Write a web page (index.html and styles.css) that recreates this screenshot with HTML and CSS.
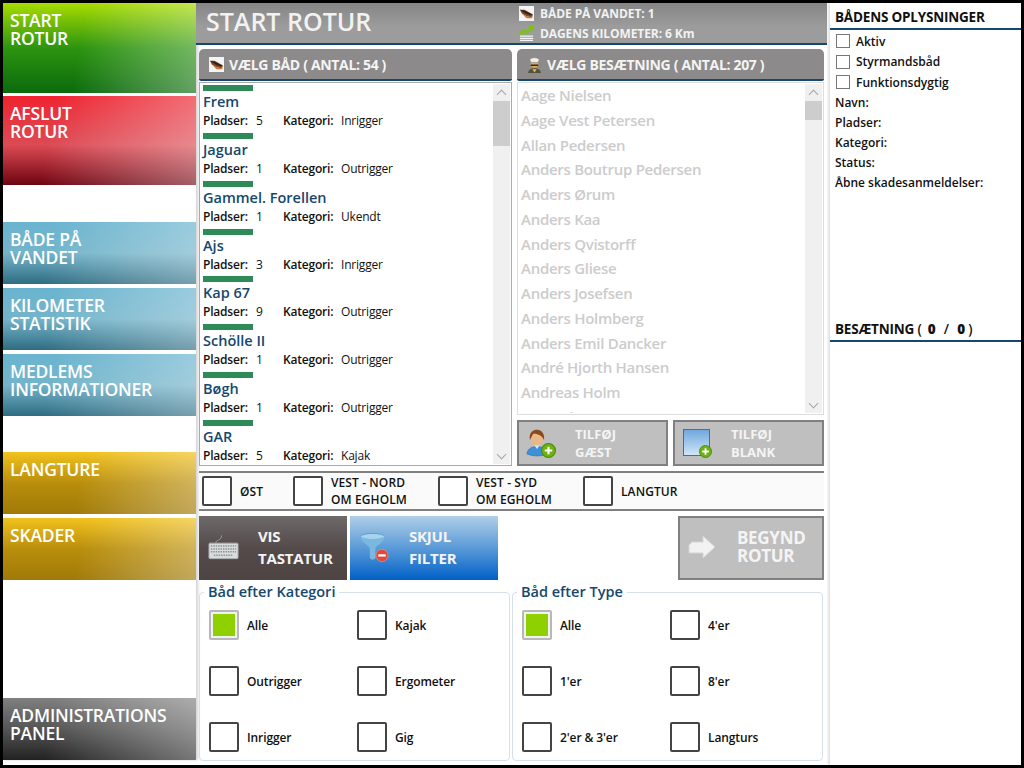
FILE: index.html
```html
<!DOCTYPE html>
<html lang="en">
<head>
  <meta charset="UTF-8">
  <title>Start rotur</title>
  <link rel="stylesheet" href="styles.css">
</head>
<body>
  <svg class="defs" width="0" height="0">
    <defs>
      <symbol id="boat" viewBox="0 0 16 16">
        <rect width="16" height="16" fill="#f4f4f4"/>
        <path d="M1 4 L6 4 L15 9 L13 12 L8 11 L3 8 Z" fill="#7a4a26"/>
        <path d="M1 4 L6 5 L14 9 L13 10 L7 8 Z" fill="#2e2018"/>
        <path d="M3 8 L8 11 L13 12 L15 9 L14 13 L8 13 Z" fill="#c8743a"/>
      </symbol>
      <symbol id="plus" viewBox="0 0 14 14">
        <circle cx="7" cy="7" r="6.5" fill="#6cb212" stroke="#4d8a0a"/>
        <path d="M7 3.5v7M3.5 7h7" stroke="#fff" stroke-width="2"/>
      </symbol>
    </defs>
  </svg>

  <div class="app">
    <nav class="side">
      <a class="nav-btn nav-big green">START<br>ROTUR</a>
      <a class="nav-btn nav-big red">AFSLUT<br>ROTUR</a>
      <a class="nav-btn blue blue-first">BÅDE PÅ<br>VANDET</a>
      <a class="nav-btn blue">KILOMETER<br>STATISTIK</a>
      <a class="nav-btn blue">MEDLEMS<br>INFORMATIONER</a>
      <a class="nav-btn gold gold-first">LANGTURE</a>
      <a class="nav-btn gold">SKADER</a>
      <a class="nav-btn dark admin">ADMINISTRATIONS<br>PANEL</a>
    </nav>

    <main class="main">
      <header class="top">
        <h1>START ROTUR</h1>
        <div class="stats">
          <div class="stat"><svg class="stat-icon"><use href="#boat"/></svg>BÅDE PÅ VANDET: 1</div>
          <div class="stat">
            <svg class="stat-icon" viewBox="0 0 16 16">
              <path d="M1 10h14v1.500H1zM1 12.500h14V14H1zM1 15h14v1H1z" fill="#f4f4f4"/>
              <path d="M1 9 L5 4.500 L8 7 L13 2" fill="none" stroke="#7cc212" stroke-width="3"/>
              <path d="M9.500 0h6v6z" fill="#7cc212"/>
            </svg>DAGENS KILOMETER: 6 Km
          </div>
        </div>
      </header>

      <div class="pickers">
        <section class="boats">
          <h2 class="panel-head"><svg class="head-icon"><use href="#boat"/></svg>VÆLG BÅD ( ANTAL: 54 )</h2>
          <div class="list boat-list">
            <div class="list-body boat-rows">
              <div class="boat"><i></i><b>Frem</b><p><span class="k1">Pladser:</span><span class="v1">5</span><span class="k2">Kategori:</span>Inrigger</p></div>
              <div class="boat"><i></i><b>Jaguar</b><p><span class="k1">Pladser:</span><span class="v1">1</span><span class="k2">Kategori:</span>Outrigger</p></div>
              <div class="boat"><i></i><b>Gammel. Forellen</b><p><span class="k1">Pladser:</span><span class="v1">1</span><span class="k2">Kategori:</span>Ukendt</p></div>
              <div class="boat"><i></i><b>Ajs</b><p><span class="k1">Pladser:</span><span class="v1">3</span><span class="k2">Kategori:</span>Inrigger</p></div>
              <div class="boat"><i></i><b>Kap 67</b><p><span class="k1">Pladser:</span><span class="v1">9</span><span class="k2">Kategori:</span>Outrigger</p></div>
              <div class="boat"><i></i><b>Schölle II</b><p><span class="k1">Pladser:</span><span class="v1">1</span><span class="k2">Kategori:</span>Outrigger</p></div>
              <div class="boat"><i></i><b>Bøgh</b><p><span class="k1">Pladser:</span><span class="v1">1</span><span class="k2">Kategori:</span>Outrigger</p></div>
              <div class="boat"><i></i><b>GAR</b><p><span class="k1">Pladser:</span><span class="v1">5</span><span class="k2">Kategori:</span>Kajak</p></div>
            </div>
            <div class="scrollbar"><span class="arrow"></span><div class="thumb thumb-boats"></div><span class="arrow arrow-down"></span></div>
          </div>
        </section>

        <section class="crew">
          <h2 class="panel-head">
            <svg class="head-icon crew-icon" viewBox="0 0 14 16">
              <path d="M1 16 C1 10 13 10 13 16Z" fill="#55523a"/>
              <path d="M5 12.500 h4 l-2 3z" fill="#d8c060"/>
              <circle cx="7" cy="7.500" r="3.600" fill="#d9aa5c"/>
              <path d="M3.500 8 h7 v1.400 h-7z" fill="#2a2a20"/>
              <path d="M2.500 3 Q7 0 11.500 3 L10.500 6 H3.500Z" fill="#f2f0e4" stroke="#777" stroke-width=".5"/>
            </svg>VÆLG BESÆTNING ( ANTAL: 207 )
          </h2>
          <div class="list crew-list">
            <div class="list-body names">
              <div>Aage Nielsen</div>
              <div>Aage Vest Petersen</div>
              <div>Allan Pedersen</div>
              <div>Anders Boutrup Pedersen</div>
              <div>Anders Ørum</div>
              <div>Anders Kaa</div>
              <div>Anders Qvistorff</div>
              <div>Anders Gliese</div>
              <div>Anders Josefsen</div>
              <div>Anders Holmberg</div>
              <div>Anders Emil Dancker</div>
              <div>André Hjorth Hansen</div>
              <div>Andreas Holm</div>
              <div>Anne Thomsen</div>
            </div>
            <div class="scrollbar"><span class="arrow"></span><div class="thumb thumb-crew"></div><span class="arrow arrow-down"></span></div>
          </div>
          <div class="add-row">
            <button class="add-btn">
              <svg class="add-icon" viewBox="0 0 30 30">
                <path d="M1 26 C1 16 21 16 21 26 Q11 30 1 26Z" fill="#3f8fd6" stroke="#2a6cab" stroke-width=".6"/>
                <path d="M8 17 L11 21 L14 17Z" fill="#cfe6f8"/>
                <ellipse cx="11" cy="10" rx="6.500" ry="7.500" fill="#eab98a"/>
                <path d="M4 12 C1 -1 20 -2 18 12 C16 7 10 5 7 6 C6 8 5 10 4 12Z" fill="#8a4a1c"/>
                <use href="#plus" x="15" y="15" width="15" height="15"/>
              </svg>
              <span>TILFØJ<br>GÆST</span>
            </button>
            <button class="add-btn">
              <svg class="add-icon" viewBox="0 0 30 30">
                <defs><linearGradient id="sheet" x1="0" y1="0" x2="0" y2="1"><stop offset="0" stop-color="#6ea6dc"/><stop offset="1" stop-color="#d2e6f8"/></linearGradient></defs>
                <rect x="1.500" y="1.500" width="26" height="26" fill="url(#sheet)" stroke="#2f74b5"/>
                <use href="#plus" x="17" y="17" width="13" height="13"/>
              </svg>
              <span>TILFØJ<br>BLANK</span>
            </button>
          </div>
        </section>
      </div>

      <div class="routes">
        <label class="route route-ost"><i class="box"></i>ØST</label>
        <label class="route route-nord"><i class="box"></i><span>VEST - NORD<br>OM EGHOLM</span></label>
        <label class="route route-syd"><i class="box"></i><span>VEST - SYD<br>OM EGHOLM</span></label>
        <label class="route"><i class="box"></i>LANGTUR</label>
      </div>

      <div class="actions">
        <button class="act act-keys">
          <svg class="act-icon" viewBox="0 0 32 26">
            <path d="M8 9 C8 5 14 7 14 1" fill="none" stroke="#999"/>
            <rect x="1" y="9" width="30" height="16" rx="1" fill="#d8dcdc" stroke="#a8acac"/>
            <path d="M3 12h26M3 15h26M3 18h26M6 21.500h20" stroke="#8d9292" stroke-width="1.600" stroke-dasharray="1.500 1"/>
          </svg>
          <span>VIS<br>TASTATUR</span>
        </button>
        <button class="act act-filter">
          <svg class="act-icon" viewBox="0 0 32 32">
            <ellipse cx="14" cy="5" rx="13" ry="3.500" fill="#a6d4ee" stroke="#5a9ccc"/>
            <path d="M1 5 C3 12 10 14 11 17 V28 Q14 31 17 28 V17 C18 14 25 12 27 5 Q14 10 1 5Z" fill="#7ab8e0"/>
            <circle cx="24" cy="25" r="6.500" fill="#e2483a" stroke="#f0a090" stroke-width=".6"/>
            <rect x="20" y="23.800" width="8" height="2.400" fill="#fff"/>
          </svg>
          <span>SKJUL<br>FILTER</span>
        </button>
        <button class="act act-begin">
          <svg class="act-icon begin-icon" viewBox="0 0 28 26">
            <path d="M1 11 L4 8 H15 V2 L27 13 L15 24 V19 H1Z" fill="#f2f2f2" stroke="#d4d4d4"/>
          </svg>
          <span>BEGYND<br>ROTUR</span>
        </button>
      </div>

      <div class="filters">
        <fieldset class="group">
          <legend>Båd efter Kategori</legend>
          <div class="opts">
            <label class="opt"><i class="box on"></i>Alle</label>
            <label class="opt"><i class="box"></i>Kajak</label>
            <label class="opt"><i class="box"></i>Outrigger</label>
            <label class="opt"><i class="box"></i>Ergometer</label>
            <label class="opt"><i class="box"></i>Inrigger</label>
            <label class="opt"><i class="box"></i>Gig</label>
          </div>
        </fieldset>
        <fieldset class="group">
          <legend>Båd efter Type</legend>
          <div class="opts">
            <label class="opt"><i class="box on"></i>Alle</label>
            <label class="opt"><i class="box"></i>4'er</label>
            <label class="opt"><i class="box"></i>1'er</label>
            <label class="opt"><i class="box"></i>8'er</label>
            <label class="opt"><i class="box"></i>2'er &amp; 3'er</label>
            <label class="opt"><i class="box"></i>Langturs</label>
          </div>
        </fieldset>
      </div>
    </main>

    <aside class="info">
      <h3>BÅDENS OPLYSNINGER</h3>
      <div class="info-body">
        <label class="check"><i></i>Aktiv</label>
        <label class="check"><i></i>Styrmandsbåd</label>
        <label class="check"><i></i>Funktionsdygtig</label>
        <div class="field">Navn:</div>
        <div class="field">Pladser:</div>
        <div class="field">Kategori:</div>
        <div class="field">Status:</div>
        <div class="field">Åbne skadesanmeldelser:</div>
      </div>
      <h3 class="crew-title">BESÆTNING <span class="count">( <b class="count-a">0</b> / <b class="count-b">0</b> )</span></h3>
    </aside>
  </div>
</body>
</html>
```

FILE: styles.css
```css
* {
  box-sizing: border-box;
}

html, body {
  margin: 0;
  height: 100%;
  overflow: hidden;
  background: #000;
}

body {
  font-family: "Open Sans", "Liberation Sans", sans-serif;
  font-size: 12px;
  font-weight: 600;
  color: #111;
}

.defs {
  position: absolute;
}

.app {
  width: 1018px;
  height: 762px;
  margin: 3px;
  background: #fff;
  display: flex;
}

/* left menu */
.side {
  width: 193px;
  flex: none;
  height: 757px;
  display: flex;
  flex-direction: column;
  box-shadow: 2px 0 3px rgba(0, 0, 0, .18);
}

.nav-btn {
  display: block;
  height: 62px;
  margin-bottom: 4px;
  padding: 8px 7px 0;
  color: #fff;
  font-size: 17.5px;
  font-weight: 600;
  line-height: 18px;
  letter-spacing: -.2px;
}

.nav-big {
  height: 90px;
  margin-bottom: 3px;
}

.nav-big.red {
  height: 89px;
}

.blue-first {
  margin-top: 34px;
}

.gold-first {
  margin-top: 32px;
}

.green {
  background:
    linear-gradient(100deg, transparent 40%, rgba(255, 255, 255, .36) 100%),
    linear-gradient(to bottom, #a8dc00 0%, #2c9410 50%, #0a6a0c 100%);
}

.red {
  background:
    linear-gradient(100deg, transparent 25%, rgba(255, 255, 255, .36) 100%),
    linear-gradient(to bottom, #ee2430 0%, #dc4a54 55%, #6e0410 100%);
}

.blue {
  background:
    linear-gradient(100deg, transparent 25%, rgba(255, 255, 255, .34) 100%),
    linear-gradient(to bottom, #6ab4d0 0%, #74b4ca 50%, #2f6c82 100%);
}

.gold {
  background:
    linear-gradient(100deg, transparent 40%, rgba(255, 255, 255, .34) 100%),
    linear-gradient(to bottom, #f2c21e 0%, #b98e0c 50%, #a07a08 100%);
}

.dark {
  background:
    linear-gradient(100deg, transparent 25%, rgba(255, 255, 255, .38) 100%),
    linear-gradient(to bottom, #808080 0%, #555 50%, #222 100%);
}

.admin {
  margin-top: auto;
  margin-bottom: 0;
}

/* middle column */
.main {
  width: 631px;
  flex: none;
  display: flex;
  flex-direction: column;
}

.top {
  height: 42px;
  display: flex;
  padding-left: 10px;
  background: linear-gradient(to bottom, #858585 0%, #9c9c9c 60%, #9c9c9c 100%);
  border-bottom: 2px solid #15486e;
  color: #f2f2f2;
}

.top h1 {
  width: 313px;
  margin: 0;
  font-size: 25px;
  font-weight: 600;
  line-height: 36px;
}

.stat {
  display: flex;
  align-items: center;
  height: 20px;
  font-size: 12px;
  font-weight: 700;
  letter-spacing: -.08px;
}

.stat-icon {
  width: 15px;
  height: 15px;
  margin-right: 6px;
}

.pickers {
  display: flex;
  gap: 5px;
  margin: 4px 3px 0;
}

.boats {
  width: 313px;
}

.crew {
  width: 307px;
}

.panel-head {
  margin: 0;
  height: 32px;
  display: flex;
  align-items: center;
  padding-left: 10px;
  background: #8c8a8a;
  border-bottom: 2px solid #15486e;
  border-radius: 5px 5px 2px 2px;
  color: #f4f4f4;
  font-size: 14px;
  font-weight: 700;
  letter-spacing: -.33px;
}

.head-icon {
  width: 15px;
  height: 15px;
  margin-right: 5px;
}

.crew-icon {
  height: 17px;
}

.list {
  display: flex;
  overflow: hidden;
  margin-top: 1px;
  border: 1px solid #aaa;
  padding: 1px;
}

.boat-list {
  height: 384px;
}

.crew-list {
  height: 333px;
  border-color: #ddd;
}

.list-body {
  flex: 1;
  overflow: hidden;
}

.boat-rows {
  padding-top: .3px;
}

.boat {
  height: 47.75px;
  padding: 1px 0 0 2px;
}

.boat i {
  display: block;
  width: 50px;
  height: 6px;
  background: #2e8b57;
}

.boat b {
  display: block;
  font-size: 14.5px;
  font-weight: 600;
  line-height: 21px;
  color: #15486e;
}

.boat p {
  margin: 0;
  display: flex;
  font-size: 12px;
  font-weight: 400;
  line-height: 18px;
  letter-spacing: -.2px;
}

.k1, .k2 {
  font-weight: 600;
}

.k1 {
  width: 53px;
}

.v1 {
  width: 27px;
}

.k2 {
  width: 58px;
}

.names {
  margin-top: -1px;
  padding-left: 2px;
  color: #ccc;
  font-size: 15px;
  font-weight: 600;
  line-height: 24.75px;
  letter-spacing: -.28px;
}

.scrollbar {
  width: 17px;
  flex: none;
  height: 100%;
  background: #f0f0f0;
  position: relative;
}

.arrow {
  display: block;
  height: 17px;
  padding-top: 7px;
}

.arrow::before {
  content: "";
  display: block;
  width: 6px;
  height: 6px;
  margin: 0 auto;
  border-top: 1px solid #a6a6a6;
  border-left: 1px solid #a6a6a6;
  transform: rotate(45deg);
}

.arrow-down {
  position: absolute;
  left: 0;
  right: 0;
  bottom: 0;
  padding-top: 4px;
}

.arrow-down::before {
  transform: rotate(225deg);
}

.thumb {
  background: #cdcdcd;
}

.thumb-boats {
  height: 45px;
}

.thumb-crew {
  height: 19px;
}

.add-row {
  display: flex;
  gap: 5px;
  margin-top: 5px;
}

button {
  font-family: inherit;
  padding: 0;
}

.add-btn {
  width: 151px;
  height: 46px;
  display: flex;
  align-items: center;
  background: #bfbfbf;
  border: 2px solid #808080;
  color: #f4f4f4;
  font-size: 13px;
  font-weight: 700;
  line-height: 18px;
  text-align: left;
}

.add-icon {
  width: 30px;
  height: 30px;
  margin: 0 19px 0 7px;
}

.routes {
  display: flex;
  align-items: center;
  height: 40px;
  margin: 5px 3px 0;
  padding-left: 3px;
  background: #fafafa;
  border-top: 2px solid #808080;
  border-bottom: 2px solid #808080;
  font-size: 12px;
  line-height: 17px;
  letter-spacing: .1px;
}

.route {
  display: flex;
  align-items: center;
}

.route-ost {
  width: 91px;
}

.route-nord {
  width: 145px;
}

.route-syd {
  width: 145px;
}

.box {
  flex: none;
  width: 30px;
  height: 30px;
  margin-right: 8px;
  background: #fff;
  border: 2px solid #444;
  border-radius: 2px;
}

.box.on {
  background: #8fd000;
  border: 2px solid #b8b8b8;
  box-shadow: inset 0 0 0 2px #f2f2f2;
}

.actions {
  display: flex;
  height: 64px;
  margin: 5px 3px 0;
}

.act {
  width: 148px;
  height: 64px;
  display: flex;
  align-items: center;
  padding-bottom: 2px;
  border: 0;
  color: #f4f4f4;
  font-size: 15px;
  font-weight: 700;
  line-height: 22px;
  letter-spacing: -.2px;
  text-align: left;
}

.act-icon {
  width: 31px;
  height: 30px;
  margin: 0 19px 0 9px;
  flex: none;
}

.act-keys {
  background: linear-gradient(to bottom, #6e6a6a 0%, #544a4a 50%, #4e4444 100%);
}

.act-filter {
  margin-left: 3px;
  background: linear-gradient(to bottom, #b0cfe8 0%, #5a9ad8 50%, #0060c8 100%);
}

.act-begin {
  width: 146px;
  margin-left: auto;
  background: #bfbfbf;
  border: 2px solid #808080;
  font-size: 17px;
  line-height: 18px;
  letter-spacing: -.3px;
}

.begin-icon {
  width: 28px;
  margin: 0 21px 0 8px;
}

.filters {
  display: flex;
  gap: 2px;
  margin: 4px 4px 0 3px;
}

.group {
  flex: 1;
  height: 177px;
  min-width: 0;
  margin: 0;
  padding: 0 0 0 9px;
  border: 1px solid #d4e0ea;
  border-radius: 4px;
}

.group legend {
  padding: 0 4px;
  margin-left: -5px;
  color: #15486e;
  font-size: 14.5px;
  font-weight: 600;
  line-height: 16px;
}

.opts {
  display: grid;
  grid-template-columns: 148px 1fr;
  grid-auto-rows: 56px;
  margin-top: -3px;
}

.opt {
  display: flex;
  align-items: center;
  font-size: 12px;
  letter-spacing: -.1px;
}

/* right column */
.info {
  flex: 1;
  margin-left: 3px;
  box-shadow: -2px 0 2px rgba(0, 0, 0, .12);
}

.info h3 {
  margin: 0;
  height: 27px;
  padding: 5px 0 0 5px;
  border-bottom: 2px solid #15486e;
  font-size: 13.5px;
  font-weight: 700;
  line-height: 18px;
  letter-spacing: -.2px;
}

.info-body {
  height: 286px;
  padding: 1px 0 0 5px;
  font-size: 12px;
}

.check {
  display: flex;
  align-items: center;
  height: 20.5px;
}

.check i {
  width: 14px;
  height: 14px;
  margin: 0 6px 0 1px;
  border: 1px solid #777;
}

.field {
  height: 20px;
  line-height: 20px;
}

.info .crew-title {
  height: 26px;
  padding-top: 4px;
}

.count {
  font-weight: 600;
}

.count-a {
  margin: 0 5px 0 3px;
}

.count-b {
  margin-left: 5px;
}
```
